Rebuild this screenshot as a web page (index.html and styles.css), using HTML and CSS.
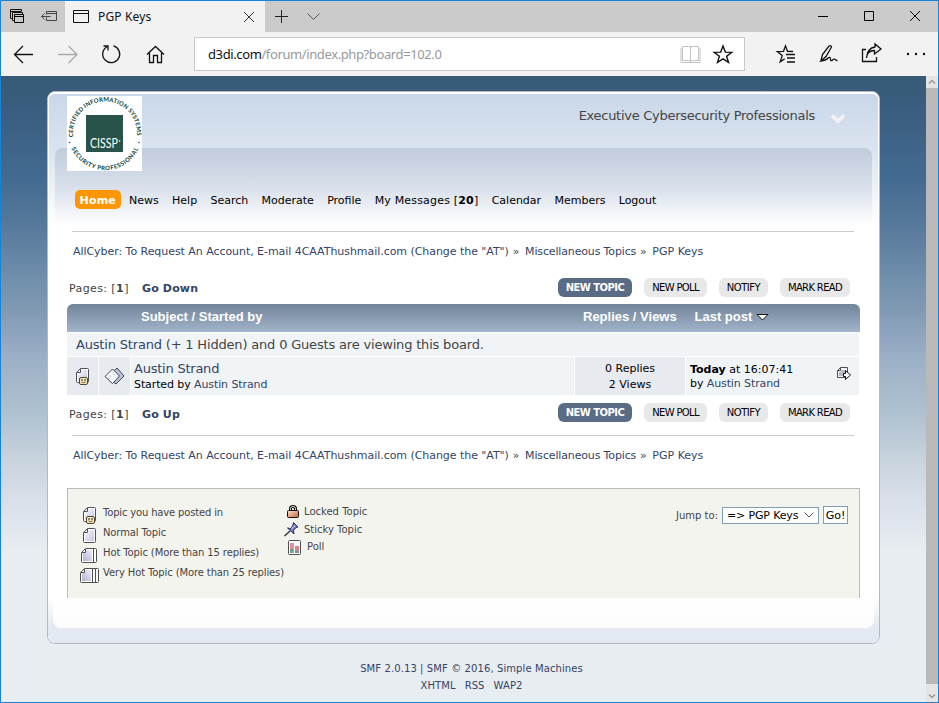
FILE: index.html
```html
<!DOCTYPE html>
<html lang="en">
<head>
<meta charset="utf-8">
<title>PGP Keys</title>
<link rel="stylesheet" href="styles.css">
</head>
<body>
<svg class="defs" width="0" height="0">
  <defs>
    <linearGradient id="paper" x1="0" y1="0" x2="1" y2="1"><stop offset="0" stop-color="#fff"/><stop offset=".3" stop-color="#e9e9fa"/><stop offset="1" stop-color="#c4c4e0"/></linearGradient>
    <linearGradient id="shaded" x1="1" y1="0" x2="0" y2="1"><stop offset="0" stop-color="#f0f0ff"/><stop offset="1" stop-color="#b0b0cc"/></linearGradient>
    <linearGradient id="lock" x1="0" y1="0" x2="1" y2="1"><stop offset="0" stop-color="#ffe3cd"/><stop offset="1" stop-color="#c8643a"/></linearGradient>
    <symbol id="page" viewBox="0 0 13 15"><path d="M4.500.500h7q1 0 1 1v12q0 1-1 1h-10q-1 0-1-1v-9z" fill="#fff" stroke="#505050"/><path d="M5 2h6v11H2V5h3z" fill="url(#paper)"/><path d="M4.500 1v3.500H1" fill="none" stroke="#505050"/></symbol>
    <symbol id="mypage" viewBox="0 0 13 17"><path d="M4.500.500h7q1 0 1 1v12q0 1-1 1h-10q-1 0-1-1v-9z" fill="#fff" stroke="#505050"/><path d="M5 2h6v11H2V5h3z" fill="url(#paper)"/><path d="M4.500 1v3.500H1" fill="none" stroke="#505050"/><rect x="3.500" y="9.500" width="8" height="7" rx="1.500" fill="#f6e9bd" stroke="#4d4635"/><path d="M6 11v2M9 11v2" stroke="#222"/><path d="M5.500 14q2 1.500 4 0" stroke="#6b5a2b" fill="none"/></symbol>
  </defs>
</svg>
<div class="window">
  <div class="tabbar">
    <div class="tabtools">
      <svg width="64" height="31" fill="none" stroke="#111"><path d="M11.500 17.500h-2v-9h11v2M9 10.500h11M13.500 19.500h-2v-8h10v2" /><path d="M13.500 13.500h9v8h-9zM13 15.500h9" stroke="#000"/><g stroke="#444"><path d="M45.500 13.500v-3h10v9h-10v-3M45 12.500h10M40.500 15.500h9M43.500 12.500l-3 3 3 3"/></g></svg>
    </div>
    <div class="tab">
      <svg width="17" height="14" fill="none" stroke="#111"><path d="M.500.500h15v12H.500zM0 3.500h16"/></svg>
      <span class="tabtitle">PGP Keys</span>
      <svg width="12" height="12" stroke="#333" fill="none"><path d="M1 1l10 10M11 1L1 11"/></svg>
    </div>
    <svg class="tabadd" width="60" height="31" fill="none" stroke="#222"><path d="M10 15.500h13M16.500 9v13"/><path d="M42.500 12.500l6 6 6-6" stroke="#555"/></svg>
    <svg class="winctl" width="130" height="31" fill="none" stroke="#000"><path d="M10 15.500h10M56.500 10.500h9v9h-9zM102 10l10 10M112 10l-10 10"/></svg>
  </div>
  <div class="toolbar">
    <svg width="193" height="44" fill="none" stroke="#111" stroke-width="1.300"><path d="M14 22.500h18M22 14l-8.500 8.500L22 31"/><path d="M57 22.500h18M67.500 14l8.500 8.500-8.500 8.500" stroke="#aaa"/><path d="M112.500 13.900a8.500 8.500 0 1 1-6.500 .8M102.500 14h4.500v4.500"/><path d="M146 22.500l8.500-8 8.500 8M148.500 21v9.500h4v-7h4v7h4V21"/></svg>
    <div class="address">
      <span class="url"><b>d3di.com</b>/forum/index.php?board=102.0</span>
      <svg width="58" height="30" fill="none"><path d="M10.500 7v15.500M2.500 7.500h6q2 0 2 1.500q0-1.500 2-1.500h6v14h-6q-2 0-2 1.500q0-1.500-2-1.500h-6zM1 9v14.500h19V9" stroke="#c3c3c3"/><path d="M43 7l2.300 6.100 6.500.2-5.200 3.900 1.900 6.200-5.500-3.600-5.500 3.600 1.900-6.200-5.200-3.900 6.500-.2z" stroke="#111" stroke-width="1.400"/></svg>
    </div>
    <svg class="hub" width="193" height="44" fill="none" stroke="#111" stroke-width="1.300"><path d="M48 19.500l-5.500-.2-2-5.500-2 5.500-6.300.3 5 4-2 6.300 4.500-3.200M41 22.500h9M42 26h8M42 30h8"/><path d="M76 28.500l1.500-6 6.500-8.500q2-1 2.500 1l-5.500 9.500-5 4.500q5-.5 7-3 2-1.500 2.500.5-.5 2.500 1.500 2 2-2.500 4-.5l1.500 1"/><path d="M121 17.500h-3.500v12h14v-4.500M121.500 26q.5-7.500 8-7.500v3.500l6.500-5-6-5v3q-7.500 1-8.500 11z"/><g fill="#111" stroke="none"><circle cx="163" cy="22" r="1.200"/><circle cx="171" cy="22" r="1.200"/><circle cx="179" cy="22" r="1.200"/></g></svg>
  </div>
  <div class="viewport">
    <div class="page">
      <div class="wrapper">
        <div class="header">
          <div class="top">
            <svg class="logo" width="75" height="75" viewBox="0 0 75 75"><rect width="75" height="75" fill="#fff"/><rect x="19" y="19" width="37" height="37" fill="#27534b"/><text x="23" y="52" class="cissp" textLength="28" lengthAdjust="spacingAndGlyphs">CISSP</text><circle cx="52.500" cy="45" r=".8" fill="#fff"/><path id="arcT" d="M6.200 41A32 32 0 1 1 69.800 41" fill="none"/><path id="arcB" d="M4 51.500A36.800 36.800 0 0 0 72 51.500" fill="none"/><text class="ring"><textPath href="#arcT" textLength="106">CERTIFIED INFORMATION SYSTEMS</textPath></text><text class="ring"><textPath href="#arcB" startOffset="1" textLength="84">SECURITY PROFESSIONAL</textPath></text><circle cx="2.500" cy="46.500" r=".8" fill="#27534b"/><circle cx="72" cy="46.500" r=".8" fill="#27534b"/></svg>
            <h1>Executive Cybersecurity Professionals</h1>
            <svg class="upshrink" width="16" height="11" fill="none"><path d="M2 2.500l6 5.500 6-5.500" stroke="#f3f0f6" stroke-width="4"/></svg>
          </div>
          <div class="menuarea">
            <nav class="menu"><a class="active">Home</a><a>News</a><a>Help</a><a>Search</a><a>Moderate</a><a>Profile</a><a class="messages">My Messages [<b>20</b>]</a><a>Calendar</a><a>Members</a><a>Logout</a></nav>
          </div>
        </div>
        <div class="content">
          <div class="crumbs"><span class="c1">AllCyber: To Request An Account, E-mail 4CAAThushmail.com (Change the "AT") </span><i>»</i><span class="c2">Miscellaneous Topics</span><i>»</i><span>PGP Keys</span></div>
          <div class="pagerow"><span class="pages">Pages: [<b>1</b>]</span><a class="go">Go Down</a><div class="buttons"><a class="primary">NEW TOPIC</a><a class="np">NEW POLL</a><a class="nt">NOTIFY</a><a class="mr">MARK READ</a></div></div>
          <div class="board">
            <div class="bhead"><span class="h1c">Subject / Started by</span><span class="h2c">Replies / Views</span><span class="h3c">Last post</span><svg width="13" height="9"><path d="M1 1.500h11L6.500 7z" fill="#fffff0" stroke="#111"/></svg></div>
            <div class="viewing"><a>Austin Strand</a> (+ 1 Hidden) and 0 Guests are viewing this board.</div>
            <div class="topic">
              <div class="cell ic"><svg width="13" height="17"><use href="#mypage"/></svg></div>
              <div class="cell ic"><svg width="21" height="20" stroke="#444"><path d="M9.500 4.500L13 1l7 8-8 8-4-3z" fill="#b9c0e2"/><path d="M1 9.500L8.500 2l7 7-7 7.500z" fill="#f4fafa"/><path d="M5 8l2 2M8 5.500l3 3M4 10l2 2" stroke="#b5c6cc"/></svg></div>
              <div class="cell subject"><a class="title">Austin Strand</a><span>Started by <a>Austin Strand</a></span></div>
              <div class="cell stats"><span>0 Replies</span><span>2 Views</span></div>
              <div class="cell last"><div><span><b>Today</b> at 16:07:41</span><span class="by">by <a>Austin Strand</a></span></div><svg width="16" height="15" stroke="#505050" fill="#f4f4fb"><path d="M4.500 1.500h7v10h-10v-7z"/><path d="M4.500 1.500v3h-3" fill="none"/><path d="M5 4h5v6H3V6h2z" fill="#b7b7c9" stroke="none"/><path d="M7.500 7.500h2v-3l5 4.500-5 4.500v-3h-2z" fill="#fff" stroke="#111"/></svg></div>
            </div>
          </div>
          <div class="pagerow lower"><span class="pages">Pages: [<b>1</b>]</span><a class="go">Go Up</a><div class="buttons"><a class="primary">NEW TOPIC</a><a class="np">NEW POLL</a><a class="nt">NOTIFY</a><a class="mr">MARK READ</a></div></div>
          <div class="crumbs second"><span class="c1">AllCyber: To Request An Account, E-mail 4CAAThushmail.com (Change the "AT") </span><i>»</i><span class="c2">Miscellaneous Topics</span><i>»</i><span>PGP Keys</span></div>
          <div class="legend">
            <ul class="kinds">
              <li><span class="ico"><svg width="13" height="17"><use href="#mypage"/></svg></span><em class="k1">Topic you have posted in</em></li>
              <li><span class="ico"><svg width="13" height="15"><use href="#page"/></svg></span><em class="k2">Normal Topic</em></li>
              <li><span class="ico"><svg width="16" height="15" stroke="#505050"><path d="M4.500.500h10q1 0 1 1v12q0 1-1 1h-13q-1 0-1-1v-9z" fill="#fff"/><path d="M5 2h6v11H2V5h3z" fill="url(#shaded)" stroke="none"/><path d="M4.500 1v3.500H1M12.500 1v13" fill="none"/></svg></span><em class="k3">Hot Topic (More than 15 replies)</em></li>
              <li><span class="ico"><svg width="19" height="15" stroke="#505050"><path d="M4.500.500h13q1 0 1 1v12q0 1-1 1h-16q-1 0-1-1v-9z" fill="#fff"/><path d="M5 2h6v11H2V5h3z" fill="url(#shaded)" stroke="none"/><path d="M4.500 1v3.500H1M12.500 1v13M15.500 1v13" fill="none"/></svg></span><em class="k4">Very Hot Topic (More than 25 replies)</em></li>
            </ul>
            <ul class="states">
              <li><span class="ico"><svg width="12" height="13"><path d="M3.500 6V3.500q0-2 2.500-2t2.500 2V6" fill="none" stroke="#111" stroke-width="3"/><path d="M3.500 6V3.500q0-2 2.500-2t2.500 2V6" fill="none" stroke="#ddd"/><rect x=".5" y="5.500" width="11" height="7" rx="1" fill="url(#lock)" stroke="#111"/></svg></span><em class="s1">Locked Topic</em></li>
              <li><span class="ico pin"><svg width="15" height="15"><path d="M.5 14L6 9" stroke="#334" stroke-width="1.400"/><path d="M9.500.500l4.500 4.500-2 .5-2.500 3 .5 3.500L3.500 6l3.500.5L9 3z" fill="#6f79c6" stroke="#2b2b60"/><path d="M7.500 7L11 3.500" stroke="#b4bcf2" stroke-width="1.200"/></svg></span><em class="s2">Sticky Topic</em></li>
              <li><span class="ico poll"><svg width="13" height="15"><rect x=".5" y=".5" width="12" height="14" rx="1" fill="#f8fafc" stroke="#505050"/><path d="M2 3h4v10H2z" fill="#db8fa0"/><path d="M7 6h4v7H7z" fill="#cf8a8f"/><path d="M2 9h3v4H2zM7 11h4v2H7z" fill="#719f8b"/></svg></span><em class="s3">Poll</em></li>
            </ul>
            <div class="jump"><span>Jump to:</span><div class="select"><span>=&gt; PGP Keys</span><svg width="10" height="6" fill="none" stroke="#555"><path d="M.5.500L5 5 9.500.500"/></svg></div><button>Go!</button></div>
          </div>
        </div>
        <div class="frame"><div class="inner"></div></div>
      </div>
      <footer><span class="f1">SMF 2.0.13 | SMF © 2016, Simple Machines</span><span class="f2"><a>XHTML</a><a>RSS</a><a>WAP2</a></span></footer>
    </div>
    <div class="scrollbar"><svg width="12" height="12" fill="none" stroke="#999" stroke-width="1.500"><path d="M3 7.500l3-3 3 3"/></svg><div class="thumb"></div><svg width="12" height="18" fill="none" stroke="#999" stroke-width="1.500"><path d="M3 10.500l3 3 3-3"/></svg></div>
  </div>
</div>
</body>
</html>
```

FILE: styles.css
```css
* { box-sizing: border-box; }
body { margin: 0; font: 11px/16px Verdana, "DejaVu Sans", sans-serif; color: #444; }
svg { display: block; flex: none; }
ul { list-style: none; margin: 0; padding: 0; }
em, i { font-style: normal; }
a { color: #334466; }
.defs { position: absolute; }
.window { width: 939px; height: 703px; border: 1px solid #1883d7; display: flex; flex-direction: column; overflow: hidden; white-space: nowrap; }

.tabbar { height: 31px; flex: none; background: #cbcbcb; display: flex; }
.tab { width: 200px; background: #f2f2f2; display: flex; align-items: center; padding: 0 10px 0 8px; }
.tabtitle { flex: 1; margin-left: 8px; font: 12px/16px "Noto Sans", sans-serif; color: #111; letter-spacing: .15px; }
.winctl { margin-left: auto; }
.toolbar { height: 44px; flex: none; background: #f2f2f2; display: flex; align-items: center; }
.address { width: 551px; height: 34px; margin-bottom: 1px; border: 1px solid #c8c8c8; background: #fff; display: flex; align-items: center; justify-content: space-between; padding-left: 13px; padding-right: 6px; }
.url { font: 13px/18px "Noto Sans", sans-serif; color: #999; letter-spacing: -.39px; }
.url b { font-weight: 400; color: #111; }

.viewport { flex: 1; display: flex; min-height: 0; }
.page { flex: 1; background: linear-gradient(#375a75 0, #3a5d80 33px, #426a90 100px, #57799b 150px, #6e8eab 200px, #8099b3 233px, #9bafc6 280px, #adc0cf 333px, #c7d3dd 383px, #dce2ec 433px, #e8edf1 475px); padding: 15px 0 0 46px; }
.wrapper { width: 833px; height: 553px; border: 1px solid #b6b8bb; border-radius: 8px; background: #fff; overflow: hidden; display: flex; flex-direction: column; }
.header { height: 134px; border: 2px solid #fff; border-width: 2px 1px 0; border-radius: 7px 7px 0 0; background: linear-gradient(#c9d7e8, #dae4ef 56px, #fff 130px); padding: 0 6px; flex: none; }
.top { height: 54px; display: flex; align-items: flex-start; }
.logo { margin: 2px 0 0 12px; position: relative; z-index: 1; }
.cissp { font: 12.5px Lato, sans-serif; fill: #fff; }
.ring { font: 900 6px Lato, sans-serif; fill: #27534b; }
h1 { margin: 13px 15px 0 auto; font: 13px/17px Verdana, "DejaVu Sans", sans-serif; color: #444; letter-spacing: -.28px; }
.upshrink { margin: 19px 26px 0 0; }
.menuarea { height: 77px; border-radius: 8px 8px 0 0; background: linear-gradient(#c0cbdd, #d9e0eb 40px, #fff 77px); padding: 42px 0 0 20px; }
.menu { display: flex; }
.menu a { height: 19px; line-height: 21px; padding: 0 4px; margin-right: 5.3px; color: #000; border-radius: 5px; }
.menu .active { width: 46px; margin-right: 4px; padding: 0 0 0 4.5px; background: #fd9604; color: #fff; font-weight: bold; letter-spacing: .2px; }
.menu .messages { letter-spacing: .18px; }

.content { height: 372px; flex: none; padding: 5px 19px 0; }
.crumbs { height: 36px; margin: 0 6px 0 5px; border-top: 1px solid #ccc; padding: 12px 0 0 1px; display: flex; color: #334466; }
.crumbs i { margin: 0 5.500px 0 4px; color: #444; }
.c1 { letter-spacing: -.05px; }
.c2 { letter-spacing: -.15px; }
.pagerow { display: flex; height: 37px; align-items: center; padding: 4px 10px 0 2px; }
.pages { width: 73px; padding-top: 2px; letter-spacing: .4px; }
.go { font-weight: bold; padding-top: 2px; letter-spacing: .15px; }
.buttons { margin-left: auto; display: flex; gap: 12px; }
.buttons a { height: 19px; line-height: 19px; font-size: 10px; text-align: center; color: #000; background: #e8e8e8; border-radius: 6px; }
.buttons .primary { width: 74px; background: #5a6c85; color: #fff; font-weight: bold; letter-spacing: -.55px; }
.buttons .np { width: 63px; letter-spacing: -.65px; }
.buttons .nt { width: 49px; letter-spacing: -.5px; }
.buttons .mr { width: 70px; letter-spacing: -.65px; }
.board { width: 793px; }
.bhead { height: 28px; border-radius: 6px 6px 0 0; background: linear-gradient(#718498, #a1b4cb); color: #fff; font: bold 13px/26px "Liberation Sans", sans-serif; display: flex; align-items: center; padding-bottom: 2px; }
.h1c { margin-left: 74px; width: 442px; }
.h2c { width: 111.5px; }
.h3c { width: 61px; }
.viewing { height: 23px; line-height: 23px; margin-top: 1px; background: #f0f4f7; font-size: 13px; letter-spacing: -.18px; padding-left: 9px; width: 792px; }
.topic { display: grid; grid-template-columns: 31px 31px 443px 110px 1fr; gap: 1px; margin-top: 1px; height: 38px; width: 792px; color: #000; }
.cell { background: #f0f4f7; display: flex; }
.ic { background: #e7eaef; align-items: center; justify-content: center; padding-top: 1px; }
.subject { flex-direction: column; padding: 3px; line-height: 15px; letter-spacing: -.1px; }
.title { font-size: 13px; line-height: 17px; letter-spacing: -.23px; }
.stats { background: #e7eaef; flex-direction: column; align-items: center; padding-top: 4px; }
.last { justify-content: space-between; align-items: flex-start; padding: 6px 7px 0 4px; line-height: 14px; }
.last div { display: flex; flex-direction: column; }
.last svg { margin-top: 3px; }
.by { letter-spacing: -.1px; }
.lower { height: 35px; padding-top: 0; margin-bottom: 5px; }
.lower .pages, .lower .go { padding-top: 4px; }
.legend { height: 111px; border: 1px solid #bbb; border-bottom: 0; margin-top: 17px; width: 793px; background: #f4f4ee; font-size: 10px; display: flex; align-items: flex-start; padding-top: 14px; }
.legend li { display: flex; height: 20px; }
.ico { display: flex; justify-content: center; align-items: center; flex: none; }
.kinds { width: 217px; padding: 0 0 0 11px; }
.kinds .ico { width: 20px; margin-right: 4px; margin-top: 4px; height: 16px; }
.kinds em { line-height: 20px; }
.k1 { letter-spacing: -.17px; }
.k2, .k3, .k4 { letter-spacing: -.12px; }
.states .ico { width: 15px; margin-right: 4px; }
.states .pin { margin: 0 5px 0 -1px; }
.states li { height: 17.500px; line-height: 17px; }
.states .poll { margin: 2px 5px 0 2px; }
.jump { margin: 3px 11px 0 auto; display: flex; align-items: center; gap: 4px; }
.jump > span { padding-top: 2px; }
.select { width: 97px; height: 17px; border: 1px solid #7f9db9; background: #fff; font-size: 11px; line-height: 15px; color: #000; display: flex; align-items: center; justify-content: space-between; padding: 0 4px; letter-spacing: -.15px; }
.jump button { width: 25px; height: 18px; border: 1px solid #7f9db9; background: #fff; color: #000; padding: 0; font: 11px/15px Verdana, "DejaVu Sans", sans-serif; }
.frame { flex: 1; background: linear-gradient(#fff, #e3eaf3 28px, #e2e9f3); padding: 0 5px 14px; }
.inner { height: 30px; background: linear-gradient(#fff, #fcfcfc); border-radius: 0 0 8px 8px; }
footer { text-align: center; font-size: 10px; line-height: 17px; padding: 16px 30px 0 0; color: #334466; display: flex; flex-direction: column; letter-spacing: .1px; }
.f2 { display: flex; justify-content: center; gap: 9px; }
.scrollbar { width: 12px; background: #e5e5e5; display: flex; flex-direction: column; }
.thumb { flex: 1; background: #b9b9b9; }
```
